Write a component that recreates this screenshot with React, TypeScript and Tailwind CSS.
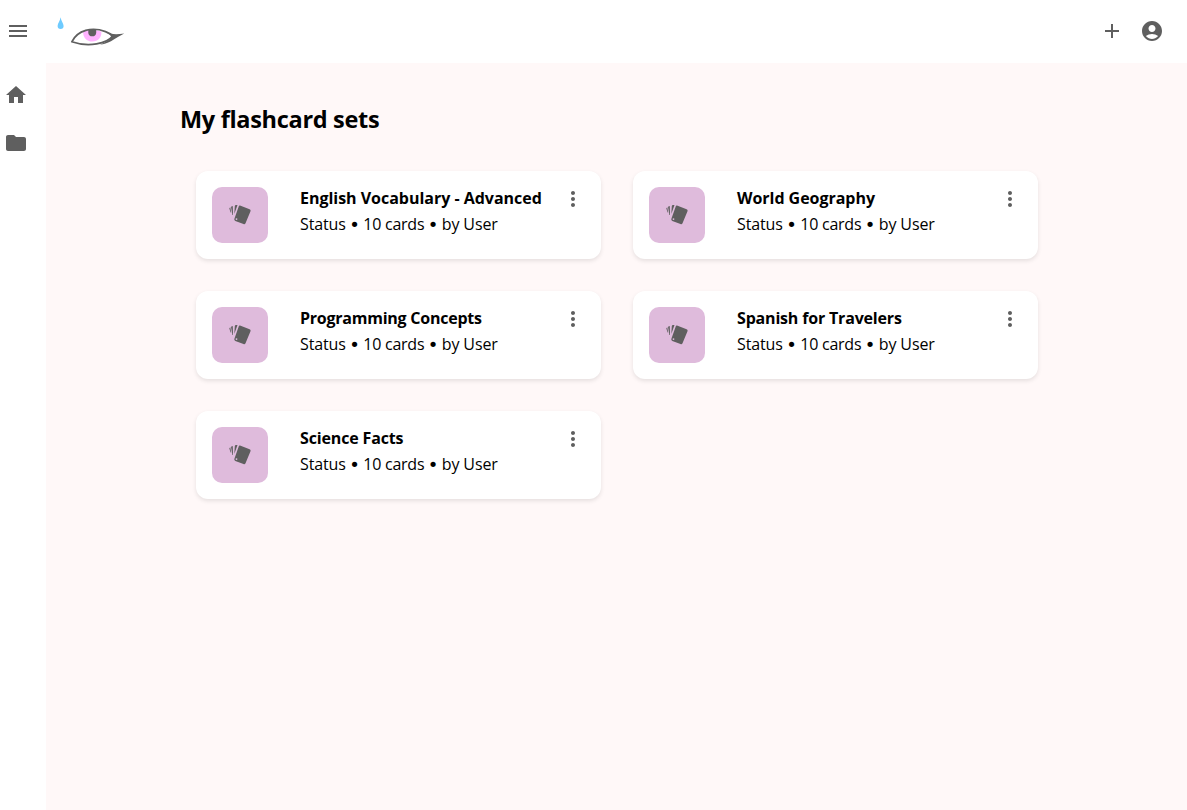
import { MdMenu, MdAdd, MdAccountCircle, MdHome, MdFolder, MdMoreVert } from "react-icons/md";

const sets = [
  { title: "English Vocabulary - Advanced", style: "tracking-[-0.02px]" },
  { title: "World Geography", style: "tracking-[-0.03px]" },
  { title: "Programming Concepts", style: "tracking-[-0.24px]" },
  { title: "Spanish for Travelers", style: "tracking-[-0.18px]" },
  { title: "Science Facts", style: "tracking-[-0.15px]" },
];

function Logo() {
  return (
    <svg className="mt-[7px]" width="72" height="36" viewBox="0 0 72 36" fill="none" aria-label="Logo">
      <path d="M6.6 .2C7 3.7 9.6 6.4 9.6 9a3 3 0 0 1-6 0C3.6 6.4 6.2 3.7 6.6 .2Z" fill="#6ecbff" />
      <path d="M29.2 14Q38 11.2 47.3 14.6C48 20.6 43.8 24.6 38.3 24.6S28.6 20.6 29.2 14Z" fill="#ffb3ff" />
      <path d="M34.3 12.6H42.2V16a4 4 0 0 1-7.9 0Z" fill="#5f5f5f" />
      <path d="M17.8 24.8C23.5 13 38 9.4 51.5 14.6C55 16 57.5 17.6 58.8 18.8C53 26.5 35 30.8 17.8 24.8Z" stroke="#5f5f5f" strokeWidth="1.7" strokeLinejoin="round" />
      <path d="M51 14.2C57 17.8 62 17.4 70.2 16.6C66 18.7 62 21.6 57 24.2C53 26.2 50 27 46 27.6C51 25.6 55.5 23 57.4 20.2C57.6 18.5 54 16.6 51 14.2Z" fill="#5f5f5f" />
    </svg>
  );
}

function CardsIcon() {
  return (
    <svg width="24" height="24" viewBox="0 0 24 24" fill="#5f5f5f">
      <path d="M12 2.5 21.6 6.2Q23.1 6.8 22.5 8.2L17.5 20.3Q16.9 21.7 15.5 21.1L7.3 17.9Q5.8 17.2 6.4 15.7L10.8 3.3Q11.1 2.2 12 2.5Z" />
      <path d="M6.8 3Q7 2.1 8 2.1H9.5L6.3 11Z" />
      <path d="M3 3.8 4.8 2.9 5 12 4.4 12Z" />
      <path d="M1.3 5.2 2.3 4.3 3.2 9.8 2.5 9.3Z" />
      <circle cx="8.5" cy="16.1" r=".9" fill="#dfbbdc" />
    </svg>
  );
}

function Dot() {
  return (
    <span className="relative top-px inline-block w-[17.5px] text-center font-['DejaVu_Sans',sans-serif] text-lg leading-none">
      •
    </span>
  );
}

function FlashcardSet({ title, style }: { title: string; style: string }) {
  return (
    <article className="flex h-22 rounded-xl bg-white p-4 shadow-[0_2px_4px_rgba(0,0,0,0.1)]">
      <div className="flex size-14 shrink-0 items-center justify-center rounded-[10px] bg-[#dfbbdc]">
        <CardsIcon />
      </div>
      <div className="ml-8 min-w-0 flex-1 whitespace-nowrap">
        <h2 className={`h-[22px] text-base leading-[22px] font-bold ${style}`}>{title}</h2>
        <p className="mt-1 h-[22px] text-base leading-[22px] tracking-[-0.12px]">
          Status
          <Dot />
          <span className="tracking-[-0.25px]">10 cards</span>
          <Dot />
          by User
        </p>
      </div>
      <button className="h-6 w-6 shrink-0 text-[#5f5f5f]" aria-label="More options">
        <MdMoreVert size={24} />
      </button>
    </article>
  );
}

export default function App() {
  return (
    <div className="flex h-screen flex-col overflow-hidden bg-white font-['Open_Sans',sans-serif] text-black">
      <header className="flex h-[63px] shrink-0 items-center justify-between pr-[23px] pb-px pl-1.5 text-[#5f5f5f]">
        <div className="flex items-center gap-6">
          <MdMenu size={24} />
          <Logo />
        </div>
        <div className="flex items-center gap-4">
          <MdAdd size={24} />
          <MdAccountCircle size={24} />
        </div>
      </header>
      <div className="flex min-h-0 flex-1">
        <nav className="flex w-[46px] shrink-0 flex-col gap-6 pt-5 pl-1 text-[#5f5f5f]">
          <MdHome size={24} />
          <MdFolder size={24} />
        </nav>
        <main className="flex-1 bg-[#fff8f8] pt-10 pl-[134px]">
          <h1 className="text-[23.5px] leading-8 font-bold tracking-[-0.31px]">My flashcard sets</h1>
          <div className="mt-9 ml-4 grid w-[842px] grid-cols-2 gap-8">
            {sets.map((set) => (
              <FlashcardSet key={set.title} {...set} />
            ))}
          </div>
        </main>
      </div>
    </div>
  );
}
